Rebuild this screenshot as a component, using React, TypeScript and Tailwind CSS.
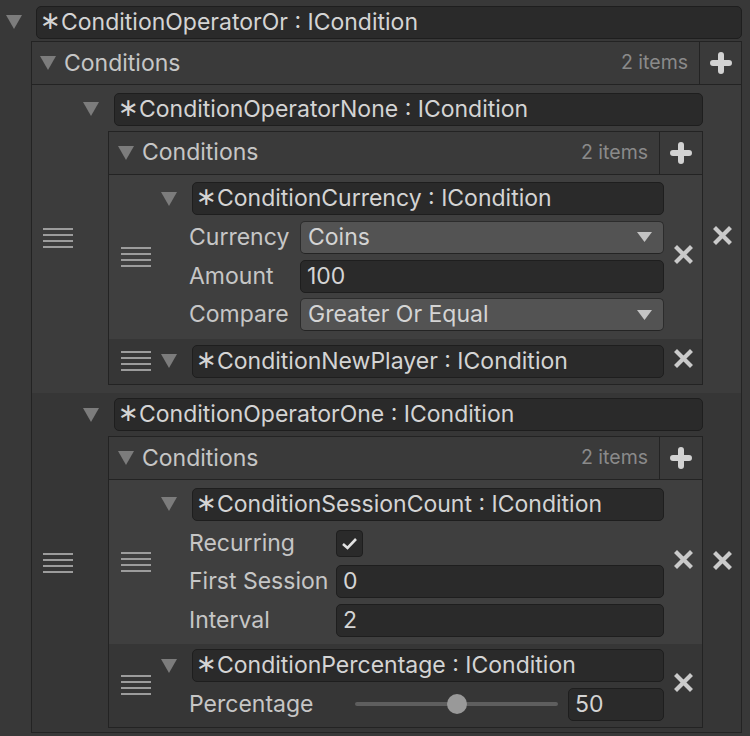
import type { ReactNode } from 'react';

function Tri() {
  return (
    <svg width="16" height="14" viewBox="0 0 16 14">
      <path d="M0 0H16L8 14Z" fill="#7c7c7c" />
    </svg>
  );
}

function Handle() {
  return (
    <svg width="30" height="20" viewBox="0 0 30 20">
      {[0, 6, 12, 18].map((y) => (
        <rect key={y} x="0" y={y} width="30" height="2" fill="#9c9c9c" />
      ))}
    </svg>
  );
}

function XIcon() {
  return (
    <svg width="19" height="19" viewBox="0 0 19 19">
      <path d="M3 3L16 16M16 3L3 16" stroke="#cacaca" strokeWidth="4.2" strokeLinecap="square" />
    </svg>
  );
}

function PlusIcon() {
  return (
    <svg width="22" height="22" viewBox="0 0 22 22">
      <path d="M11 3V19M3 11H19" stroke="#d2d2d2" strokeWidth="6" strokeLinecap="round" />
    </svg>
  );
}

function ObjectField({ name }: { name: string }) {
  return (
    <div className="flex h-[33px] w-full items-center rounded-[5px] border border-[#1e1e1e] bg-[#2a2a2a] pl-[3px] text-[#d4d4d4]">
      <span className="-translate-y-[2px] font-['DejaVu_Sans',sans-serif] text-[25px] leading-none">∗</span>
      {name} : ICondition
    </div>
  );
}

function Row({ children }: { children: ReactNode }) {
  return <div className="flex h-[34.6px] items-center">{children}</div>;
}

function Label({ w, text }: { w: string; text: string }) {
  return <div className={`${w} shrink-0 pl-[3px]`}>{text}</div>;
}

function Dropdown({ value }: { value: string }) {
  return (
    <div className="flex h-[33px] flex-1 items-center justify-between rounded-[5px] border border-[#2c2c2c] border-b-[#242424] bg-[#535353] pl-[7px] pr-[11px] text-[#d4d4d4]">
      {value}
      <svg width="15" height="10" viewBox="0 0 15 10">
        <path d="M0 0H15L7.5 10Z" fill="#c4c4c4" />
      </svg>
    </div>
  );
}

function TextField({ value, w = 'flex-1' }: { value: string; w?: string }) {
  return (
    <div className={`flex h-[33px] ${w} items-center rounded-[5px] border border-[#1e1e1e] bg-[#2a2a2a] pl-[6px] text-[#d4d4d4]`}>
      {value}
    </div>
  );
}

function ListHeader() {
  return (
    <div className="flex h-[43px] border-b border-[#232323] bg-[#3a3a3a]">
      <div className="flex flex-1 items-center pl-[9px]">
        <Tri />
        <span className="ml-[8px]">Conditions</span>
        <span className="ml-auto pr-[11px] text-[19.5px] text-[#8a8a8a]">2 items</span>
      </div>
      <div className="flex w-[43px] items-center justify-center border-l border-[#232323]">
        <PlusIcon />
      </div>
    </div>
  );
}

function SubElement({
  name,
  bg,
  pt,
  pb,
  children,
}: {
  name: string;
  bg: string;
  pt: string;
  pb: string;
  children?: ReactNode;
}) {
  return (
    <div className={`grid grid-cols-[52px_25px_478px_1fr] ${bg} ${pt} ${pb}`}>
      <div className="col-start-1 row-span-2 row-start-1 flex items-center pl-[12px]">
        <Handle />
      </div>
      <div className="col-start-2 row-start-1 flex h-[34.6px] items-center">
        <Tri />
      </div>
      <div className="col-start-3 row-start-1 flex h-[34.6px] items-center pl-[6px]">
        <ObjectField name={name} />
      </div>
      <div className="col-start-4 row-span-2 row-start-1 flex items-center justify-center pb-[5px]">
        <XIcon />
      </div>
      {children && (
        <div className="col-start-3 row-start-2 mt-[4px] flex flex-col gap-[4px]">{children}</div>
      )}
    </div>
  );
}

function OuterElement({
  name,
  bg,
  pt,
  pb,
  children,
}: {
  name: string;
  bg: string;
  pt: string;
  pb: string;
  children: ReactNode;
}) {
  return (
    <div className={`grid grid-cols-[51px_25px_595px_1fr] ${bg} ${pt} ${pb}`}>
      <div className="col-start-1 row-span-2 row-start-1 flex items-center pl-[11px]">
        <Handle />
      </div>
      <div className="col-start-2 row-start-1 flex h-[34.6px] items-center">
        <Tri />
      </div>
      <div className="col-start-3 row-start-1 flex h-[34.6px] items-center pl-[6px]">
        <ObjectField name={name} />
      </div>
      <div className="col-start-4 row-span-2 row-start-1 flex items-center justify-center pb-[5px]">
        <XIcon />
      </div>
      <div className="col-start-3 row-start-2 mt-[4px] border border-[#232323]">
        <ListHeader />
        {children}
      </div>
    </div>
  );
}

export default function App() {
  return (
    <div className="h-[736px] w-[750px] overflow-hidden bg-[#383838] pt-[5px] font-[Inter,'DejaVu_Sans',sans-serif] text-[23px] leading-none text-[#c6c6c6]">
      <div className="flex h-[34px] items-center pr-[8px]">
        <div className="w-[36px] pl-[6px]">
          <Tri />
        </div>
        <div className="flex-1">
          <ObjectField name="ConditionOperatorOr" />
        </div>
      </div>

      <div className="ml-[31px] mr-[8px] mt-[2px] border border-[#232323]">
        <div className="flex h-[43px] border-b border-[#232323] bg-[#3a3a3a]">
          <div className="flex flex-1 items-center pl-[8px]">
            <Tri />
            <span className="ml-[8px]">Conditions</span>
            <span className="ml-auto pr-[11px] text-[19.5px] text-[#8a8a8a]">2 items</span>
          </div>
          <div className="flex w-[42px] items-center justify-center border-l border-[#232323]">
            <PlusIcon />
          </div>
        </div>

        <OuterElement name="ConditionOperatorNone" bg="bg-[#3c3c3c]" pt="pt-[7px]" pb="pb-[8px]">
          <SubElement name="ConditionCurrency" bg="bg-[#3f3f3f]" pt="pt-[7px]" pb="pb-[7px]">
            <Row>
              <Label w="w-[114px]" text="Currency" />
              <Dropdown value="Coins" />
            </Row>
            <Row>
              <Label w="w-[114px]" text="Amount" />
              <TextField value="100" />
            </Row>
            <Row>
              <Label w="w-[114px]" text="Compare" />
              <Dropdown value="Greater Or Equal" />
            </Row>
          </SubElement>
          <SubElement name="ConditionNewPlayer" bg="bg-[#363636]" pt="pt-[5px]" pb="pb-[5px]" />
        </OuterElement>

        <OuterElement name="ConditionOperatorOne" bg="bg-[#363636]" pt="pt-[5px]" pb="pb-[4px]">
          <SubElement name="ConditionSessionCount" bg="bg-[#3f3f3f]" pt="pt-[7px]" pb="pb-[6px]">
            <Row>
              <Label w="w-[150px]" text="Recurring" />
              <div className="flex h-[27px] w-[27px] items-center justify-center rounded-[4px] border border-[#1e1e1e] bg-[#2a2a2a]">
                <svg width="17" height="13" viewBox="0 0 17 13">
                  <path d="M2 7L6.5 11L15 2" fill="none" stroke="#e2e2e2" strokeWidth="2.6" />
                </svg>
              </div>
            </Row>
            <Row>
              <Label w="w-[150px]" text="First Session" />
              <TextField value="0" />
            </Row>
            <Row>
              <Label w="w-[150px]" text="Interval" />
              <TextField value="2" />
            </Row>
          </SubElement>
          <SubElement name="ConditionPercentage" bg="bg-[#363636]" pt="pt-[5px]" pb="pb-[5px]">
            <Row>
              <Label w="w-[169px]" text="Percentage" />
              <div className="relative h-[4px] w-[203px] rounded-[2px] bg-[#5e5e5e]">
                <div className="absolute left-[92px] top-[-8px] h-[20px] w-[20px] rounded-full bg-[#999999]" />
              </div>
              <div className="ml-[10px] flex w-[96px]">
                <TextField value="50" />
              </div>
            </Row>
          </SubElement>
        </OuterElement>
      </div>
    </div>
  );
}
